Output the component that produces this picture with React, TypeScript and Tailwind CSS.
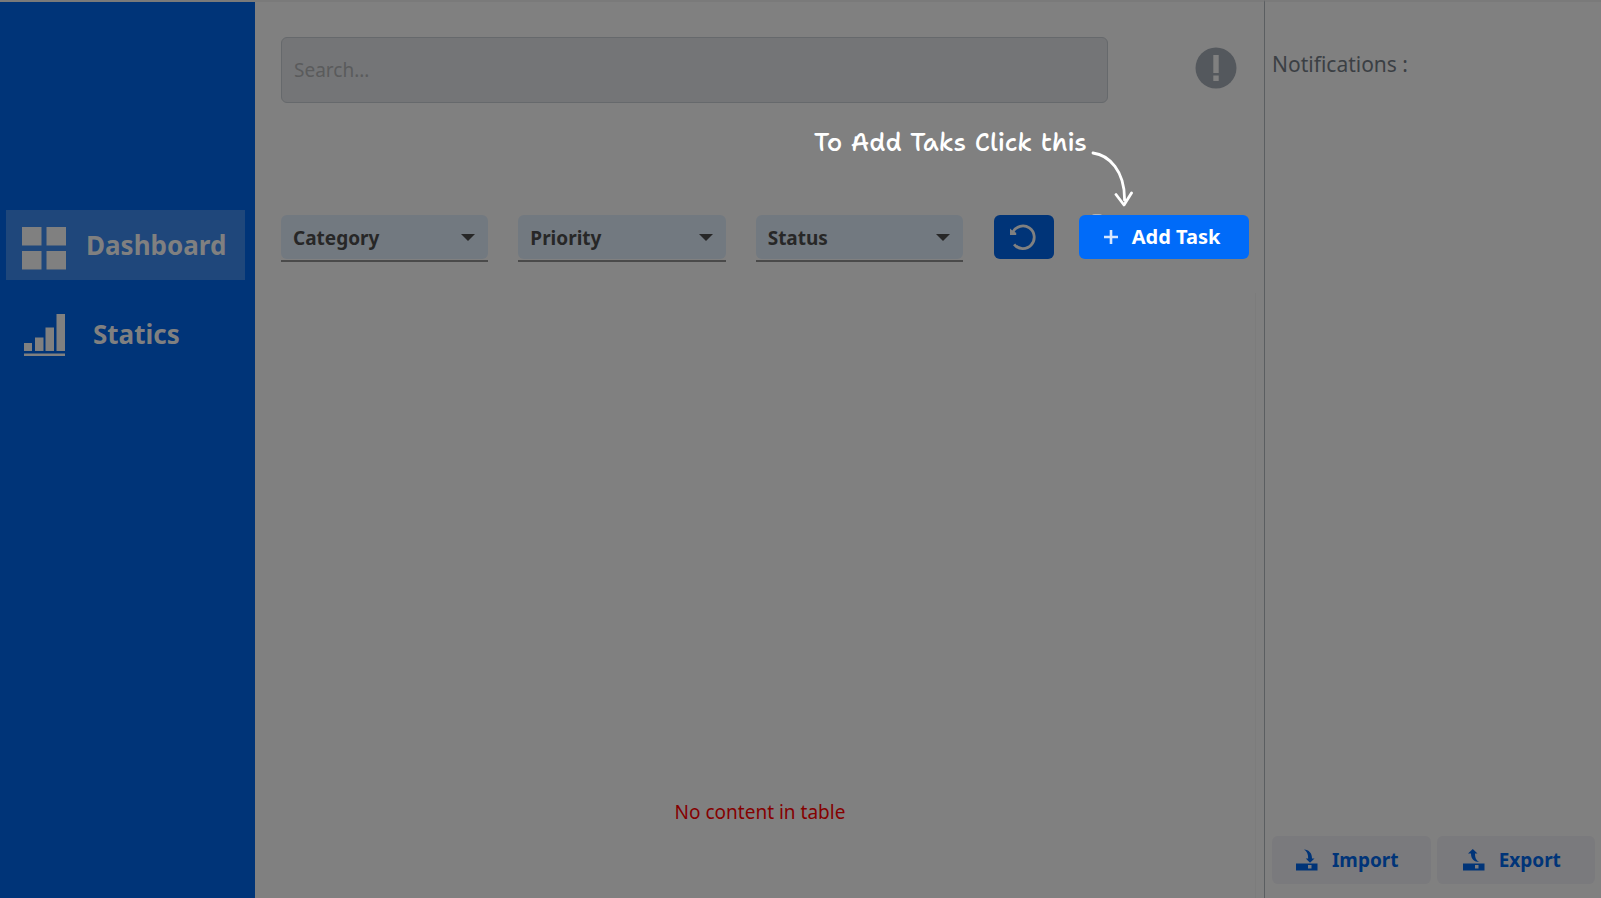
import type { ReactNode } from 'react';

function DashboardIcon() {
  return (
    <svg viewBox="0 0 44 43" className="h-[43px] w-[44px] shrink-0 fill-[#808080]" aria-hidden="true">
      <path d="M0 0h19.500v18.500H0zM24.500 0H44v18.500H24.500zM0 24h19.500v18.500H0zM24.500 24H44v18.500H24.500z" />
    </svg>
  );
}

function ChartIcon() {
  return (
    <svg viewBox="0 0 41 42" className="h-[42px] w-[41px] shrink-0 fill-[#808080]" aria-hidden="true">
      <path d="M0 29h8v8H0zM11 23.500h8.500V37H11zM21.500 13.500H30V37h-8.500zM32.500 0H41v37h-8.500zM0 39.500h41V42H0z" />
    </svg>
  );
}

function AlertIcon() {
  return (
    <svg viewBox="0 0 42 42" className="h-[42px] w-[42px]" aria-hidden="true">
      <circle cx="21" cy="21" r="20.500" fill="#54585d" />
      <path d="M18.300 8h5.400v18h-5.400zM18.300 28.500h5.400v5.500h-5.400z" fill="#808080" />
    </svg>
  );
}

function ResetIcon() {
  return (
    <svg viewBox="0 0 26 26" className="h-[26px] w-[26px]" aria-hidden="true">
      <path d="M2.800 8.200A11.300 11.300 0 1 1 4.100 20.300" fill="none" stroke="#808080" strokeWidth="2.800" />
      <path d="M0 4.500V11h6.200V8.800L3.500 7.500z" fill="#808080" />
    </svg>
  );
}

function PlusIcon() {
  return (
    <svg viewBox="0 0 14 14" className="h-[14px] w-[14px]" aria-hidden="true">
      <path d="M7 0v14M0 7h14" stroke="#d5e6ff" strokeWidth="2.600" />
    </svg>
  );
}

function ImportIcon() {
  return (
    <svg viewBox="0 0 22 22" className="h-[22px] w-[22px] fill-[#003478]" aria-hidden="true">
      <path d="M8 0.500C13 1 16 4 16 9.500h2.500L14 13.700 9.800 9.500h2.400C12.200 5 11 2.500 8 0.500z" />
      <path fillRule="evenodd" d="M0 14.500h21.500v7H0zM12 16v3.500h3.500V16z" />
    </svg>
  );
}

function ExportIcon() {
  return (
    <svg viewBox="0 0 22 22" className="h-[22px] w-[22px] fill-[#003478]" aria-hidden="true">
      <path d="M9.800 0L14.500 4.500H12c0 4.500 1.200 7 4.500 8.500C11 13 8 10 8 4.500H5z" />
      <path fillRule="evenodd" d="M0 14.500h21.500v7H0zM12 16v3.500h3.500V16z" />
    </svg>
  );
}

function Filter({ name }: { name: string }) {
  return (
    <div className="relative flex-1 border-b-2 border-[#4a4a4a] pb-px">
      <select
        aria-label={name}
        className="block h-[44px] w-full appearance-none rounded-md bg-[#727980] px-3 pt-0.5 text-[19px] font-bold text-[#272727]"
      >
        <option>{name}</option>
      </select>
      <svg viewBox="0 0 14 7" className="pointer-events-none absolute top-[19px] right-[13px] h-[7px] w-[14px]" aria-hidden="true">
        <path d="M0 0h14L7 7z" fill="#272727" />
      </svg>
    </div>
  );
}

function PanelButton({ icon, children }: { icon: ReactNode; children: ReactNode }) {
  return (
    <button className="flex h-[48px] flex-1 items-center justify-center gap-3.5 rounded-md bg-[#7a7a7d] pr-2 text-[19px] font-bold text-[#003478]">
      {icon}
      {children}
    </button>
  );
}

export default function App() {
  return (
    <div className="flex min-h-screen bg-[#808080] font-['Noto_Sans',sans-serif]">
      <nav className="w-[255px] shrink-0 border-t-2 border-[#7a7a7a] bg-[#003478] pt-[208px] pr-2.5 pl-1.5 text-[26px] font-bold text-[#808080]">
        <a href="#dashboard" className="flex h-[70px] items-center gap-5 bg-[#1f477b] pt-1.5 pl-4">
          <DashboardIcon />
          <span className="-mt-1.5">Dashboard</span>
        </a>
        <a href="#statics" className="mt-5 flex h-[70px] items-center gap-7 pl-[18px]">
          <ChartIcon />
          <span className="-mt-0.5">Statics</span>
        </a>
      </nav>

      <main className="flex min-w-0 flex-1 flex-col border-t-2 border-[#7a7a7a] pt-[35px] pl-[26px]">
        <header className="flex items-center gap-[87px] pr-[27px]">
          <input
            type="text"
            aria-label="Search"
            placeholder="Search..."
            className="h-[66px] min-w-0 flex-1 rounded-md border border-[#66696c] bg-[#747577] px-3 text-[19px] text-[#272727] placeholder:text-[#5a5b5c]"
          />
          <button aria-label="Alerts" className="-mt-1">
            <AlertIcon />
          </button>
        </header>

        <div className="mt-28 flex items-start pr-[15px]">
          <div className="flex flex-1 gap-[30px]">
            <Filter name="Category" />
            <Filter name="Priority" />
            <Filter name="Status" />
          </div>
          <button aria-label="Reset filters" className="ml-[31px] flex h-[44px] w-[60px] items-center justify-center rounded-md bg-[#003478] pr-0.5">
            <ResetIcon />
          </button>
          <div className="relative ml-[25px]">
            <span className="absolute -top-px left-3 h-2 w-3 rounded-full bg-[#b4b4b4]" />
            <button className="relative flex h-[44px] w-[170px] items-center justify-center gap-3.5 rounded-md bg-[#006bf9] pr-1 text-[20px] font-bold text-white">
              <PlusIcon />
              Add Task
            </button>
            <div className="absolute right-[162px] bottom-[101px] text-[25px] leading-8 font-medium whitespace-nowrap text-white font-['Shantell_Sans','Comic_Sans_MS',Lato,sans-serif]">
              To Add Taks Click this
            </div>
            <svg viewBox="0 0 44 56" className="absolute bottom-[52px] left-[10px] h-[56px] w-[44px]" fill="none" stroke="#fff" strokeWidth="2.800" strokeLinecap="round" strokeLinejoin="round" aria-hidden="true">
              <path d="M4 2C20 4 36 20 35.500 49M27 43.500L35 54 42.500 42" />
            </svg>
          </div>
        </div>

        <table className="mt-[31px] mr-2 flex-1 border-r border-[#7c7c7c]">
          <tbody>
            <tr>
              <td className="pr-4 pb-[72px] text-center align-bottom text-[19px] text-[#850000]">No content in table</td>
            </tr>
          </tbody>
        </table>
      </main>

      <aside className="flex w-[337px] shrink-0 flex-col border-t-2 border-l border-t-[#7a7a7a] border-l-[#5b5e61] pt-[47px] pr-1.5 pb-3.5 pl-[7px]">
        <h2 className="text-[21px] text-[#3b3f44]">Notifications :</h2>
        <div className="mt-auto flex gap-1.5">
          <PanelButton icon={<ImportIcon />}>Import</PanelButton>
          <PanelButton icon={<ExportIcon />}>Export</PanelButton>
        </div>
      </aside>
    </div>
  );
}
